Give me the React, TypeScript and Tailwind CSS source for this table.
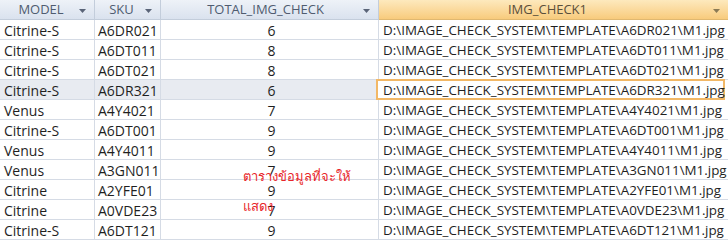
import React from "react";

const rows = [
  ["Citrine-S", "A6DR021", "6"],
  ["Citrine-S", "A6DT011", "8"],
  ["Citrine-S", "A6DT021", "8"],
  ["Citrine-S", "A6DR321", "6"],
  ["Venus", "A4Y4021", "7"],
  ["Citrine-S", "A6DT001", "9"],
  ["Venus", "A4Y4011", "9"],
  ["Venus", "A3GN011", "7"],
  ["Citrine", "A2YFE01", "9"],
  ["Citrine", "A0VDE23", "7"],
  ["Citrine-S", "A6DT121", "9"],
];

const Arrow = ({ light }: { light?: boolean }) => (
  <svg width="7" height="4" viewBox="0 0 7 4" className="absolute right-[8px] top-[9px]">
    <path d="M0 0H7L3.5 4Z" fill={light ? "#8a7a55" : "#5a6478"} />
  </svg>
);

const hdr =
  "relative h-[20px] flex items-center justify-center bg-gradient-to-b from-[#eef2f8] to-[#dae2ee] border-r border-b border-[#c3cddb] text-[#4f5c70] text-[13px]";

export default function App() {
  return (
    <div
      className="relative w-[728px] h-[242px] overflow-hidden bg-white text-[14px] text-[#1f1f1f]"
      style={{ fontFamily: '"Open Sans", "Noto Sans", sans-serif' }}
    >
      <div className="grid grid-cols-[95px_66px_218px_349px]">
        <div className={`${hdr} pr-[12px]`}>
          MODEL
          <Arrow />
        </div>
        <div className={`${hdr} pr-[12px]`}>
          SKU
          <Arrow />
        </div>
        <div className={`${hdr} pr-[8px]`}>
          TOTAL_IMG_CHECK
          <Arrow />
        </div>
        <div className="relative h-[20px] flex items-center justify-center pr-[12px] bg-gradient-to-b from-[#fde9bd] to-[#f8cb7c] border-b border-[#e0b870] text-[#5a4f3a] text-[13px]">
          IMG_CHECK1
          <Arrow light />
        </div>
        {rows.map((r, i) => {
          const sel = i === 3;
          const bg = sel ? "bg-[#e8ebf1]" : "bg-white";
          return (
            <React.Fragment key={i}>
              <div className={`h-[20px] flex items-center pt-[2px] pl-[4px] border-r border-b border-[#d5dbe5] ${bg}`}>{r[0]}</div>
              <div className={`h-[20px] flex items-center pt-[2px] pl-[3px] border-r border-b border-[#d5dbe5] ${bg}`}>{r[1]}</div>
              <div className={`h-[20px] flex items-center justify-center pt-[2px] pl-[4px] border-r border-b border-[#d5dbe5] ${bg}`}>{r[2]}</div>
              {sel ? (
                <div className="h-[21px] -mt-[1px] -ml-[3px] mr-[3px] flex items-center pt-[2px] pl-[5px] bg-white border-2 border-[#f2b866] text-[13.4px] whitespace-nowrap">
                  D:\IMAGE_CHECK_SYSTEM\TEMPLATE\{r[1]}\M1.jpg
                </div>
              ) : (
                <div className="h-[20px] flex items-center pt-[2px] pl-[4px] border-b border-[#d5dbe5] bg-white text-[13.4px] whitespace-nowrap">
                  D:\IMAGE_CHECK_SYSTEM\TEMPLATE\{r[1]}\M1.jpg
                </div>
              )}
            </React.Fragment>
          );
        })}
      </div>
      <div
        className="absolute left-[243px] top-[161px] text-[13px] leading-[30px] text-[#e8262a]"
        style={{ fontFamily: '"Noto Sans", sans-serif' }}
      >
        <div>ตารางข้อมูลที่จะให้</div>
        <div>แสดง</div>
      </div>
    </div>
  );
}
